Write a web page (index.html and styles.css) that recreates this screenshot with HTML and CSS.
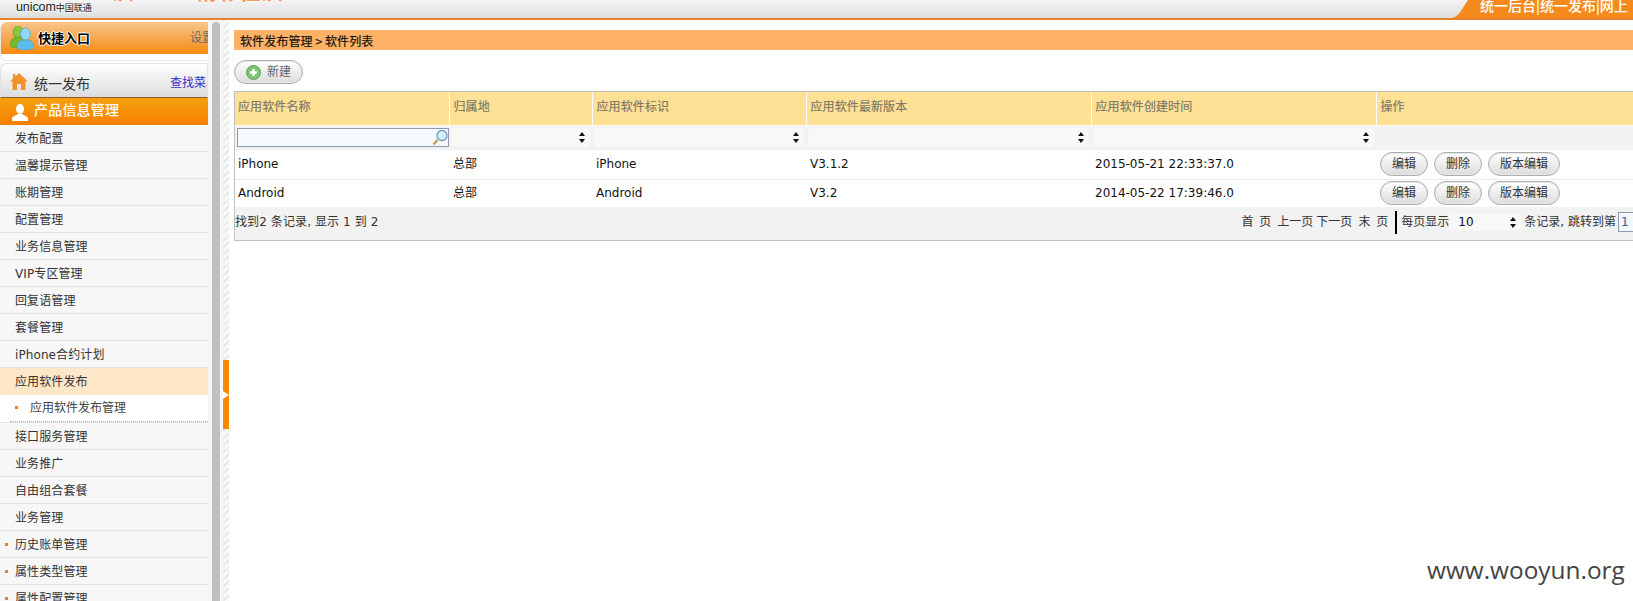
FILE: index.html
```html
<!DOCTYPE html>
<html lang="zh-CN">
<head>
<meta charset="utf-8">
<title>软件列表</title>
<link rel="stylesheet" href="styles.css">
</head>
<body>
<div class="page">
  <header class="topbar">
    <div class="logo"><span class="logo-uni">unicom</span><span class="logo-cn">中国联通</span></div>
    <div class="slogan"><span>沃3G</span><span class="slogan-b">精彩在沃</span></div>
    <div class="top-tab">
      <svg class="tab-curve" width="18" height="18" viewBox="0 0 18 18"><path d="M0 18C9 18 11 10 18 0V18Z" fill="#f58a1c"/></svg>
      <div class="tab-body">统一后台|统一发布|网上</div>
    </div>
  </header>
  <div class="body">
    <aside class="sidebar">
      <section class="quick">
        <div class="quick-head">
          <svg class="quick-icon" width="24" height="24" viewBox="0 0 24 24">
            <ellipse cx="8" cy="6" rx="5" ry="6" fill="#8cc63c" stroke="#5f9a20" stroke-width=".6"/><path d="M0 19c0-5 3-8 8-8s6 2 6 8l-6 3c-4 0-8-1-8-3Z" fill="#7ab62c" stroke="#5f9a20" stroke-width=".6"/>
            <ellipse cx="15.500" cy="8" rx="5" ry="6" fill="#8fd8f6" stroke="#3f9fd0" stroke-width=".6"/><path d="M7 21c0-5 3-7 8.500-7s8.500 2 8.500 7c0 2-4 3-8.500 3s-8.500-1-8.500-3Z" fill="#5cbcea" stroke="#3f9fd0" stroke-width=".6"/>
          </svg>
          <span class="quick-title">快捷入口</span>
          <span class="quick-set">设置</span>
        </div>
      </section>
      <section class="nav">
        <div class="nav-title">
          <svg class="home-icon" width="18" height="17" viewBox="0 0 18 17"><path d="M9 0 18 8.500H15.500V17H11V11H7V17H2.500V8.500H0L3 5.700V1H5.500V3.400Z" fill="#f0922a"/></svg>
          <span class="nav-name">统一发布</span>
          <span class="nav-find">查找菜单</span>
        </div>
        <div class="nav-group">
          <svg class="person-icon" width="16" height="17" viewBox="0 0 16 17"><ellipse cx="8" cy="5" rx="4" ry="5" fill="#fff"/><path d="M0 17V14.500C0 12.500 4 11.500 6 10H10C12 11.500 16 12.500 16 14.500V17Z" fill="#fff"/></svg>
          <span class="nav-group-name">产品信息管理</span>
        </div>
        <ul class="nav-list">
          <li class="nav-item">发布配置</li>
          <li class="nav-item">温馨提示管理</li>
          <li class="nav-item">账期管理</li>
          <li class="nav-item">配置管理</li>
          <li class="nav-item">业务信息管理</li>
          <li class="nav-item">VIP专区管理</li>
          <li class="nav-item">回复语管理</li>
          <li class="nav-item">套餐管理</li>
          <li class="nav-item">iPhone合约计划</li>
          <li class="nav-item nav-active">应用软件发布</li>
          <li class="nav-sub"><div class="nav-sub-row"><i class="dot"></i>应用软件发布管理</div></li>
          <li class="nav-item">接口服务管理</li>
          <li class="nav-item">业务推广</li>
          <li class="nav-item">自由组合套餐</li>
          <li class="nav-item">业务管理</li>
          <li class="nav-item nav-dot"><i class="dot"></i>历史账单管理</li>
          <li class="nav-item nav-dot"><i class="dot"></i>属性类型管理</li>
          <li class="nav-item nav-dot"><i class="dot"></i>属性配置管理</li>
        </ul>
      </section>
    </aside>
    <div class="scroll-track"><div class="scroll-thumb"></div></div>
    <div class="splitter"><div class="split-handle"><i class="split-arrow"></i></div></div>
    <main class="main">
      <div class="crumb">软件发布管理 &gt; 软件列表</div>
      <div class="toolbar">
        <button class="btn btn-new" type="button">
          <svg width="15" height="15" viewBox="0 0 15 15"><circle cx="7.500" cy="7.500" r="7" fill="#7cc576" stroke="#5aa552"/><path d="M7.500 4v7M4 7.500h7" stroke="#fff" stroke-width="2.400"/></svg>
          新建
        </button>
      </div>
      <div class="grid">
        <table class="table">
          <colgroup>
            <col class="c1"><col class="c2"><col class="c3"><col class="c4"><col class="c5"><col class="c6">
          </colgroup>
          <thead>
            <tr class="head">
              <th>应用软件名称</th><th>归属地</th><th>应用软件标识</th><th>应用软件最新版本</th><th>应用软件创建时间</th><th>操作</th>
            </tr>
            <tr class="filter">
              <td><div class="search"><svg width="16" height="17" viewBox="0 0 16 17"><path d="M5.500 11 1.500 15.500" stroke="#c9995c" stroke-width="2.500"/><circle cx="10" cy="6.500" r="5" fill="#d8eefa" stroke="#6c9fc2" stroke-width="1.300"/></svg></div></td>
              <td><div class="sel"><svg class="updown" width="6" height="11" viewBox="0 0 6 11"><path d="M3 0 6 4H0ZM3 11 0 7H6Z"/></svg></div></td>
              <td><div class="sel"><svg class="updown" width="6" height="11" viewBox="0 0 6 11"><path d="M3 0 6 4H0ZM3 11 0 7H6Z"/></svg></div></td>
              <td><div class="sel"><svg class="updown" width="6" height="11" viewBox="0 0 6 11"><path d="M3 0 6 4H0ZM3 11 0 7H6Z"/></svg></div></td>
              <td><div class="sel"><svg class="updown" width="6" height="11" viewBox="0 0 6 11"><path d="M3 0 6 4H0ZM3 11 0 7H6Z"/></svg></div></td>
              <td></td>
            </tr>
          </thead>
          <tbody>
            <tr class="row">
              <td>iPhone</td><td class="muted">总部</td><td>iPhone</td><td>V3.1.2</td><td>2015-05-21 22:33:37.0</td>
              <td><div class="ops"><button class="btn" type="button">编辑</button><button class="btn" type="button">删除</button><button class="btn btn-wide" type="button">版本编辑</button></div></td>
            </tr>
            <tr class="row">
              <td>Android</td><td class="muted">总部</td><td>Android</td><td>V3.2</td><td>2014-05-22 17:39:46.0</td>
              <td><div class="ops"><button class="btn" type="button">编辑</button><button class="btn" type="button">删除</button><button class="btn btn-wide" type="button">版本编辑</button></div></td>
            </tr>
          </tbody>
        </table>
        <div class="footer">
          <span class="count">找到2 条记录, 显示 1 到 2</span>
          <div class="pager">
            <span class="pg pg-first">首 页</span>
            <span class="pg pg-prev">上一页</span>
            <span class="pg pg-next">下一页</span>
            <span class="pg pg-last">末 页</span>
            <i class="pg-bar"></i>
            <span class="pg-label">每页显示</span>
            <div class="size"><span>10</span><svg class="updown" width="6" height="11" viewBox="0 0 6 11"><path d="M3 0 6 4H0ZM3 11 0 7H6Z"/></svg></div>
            <span class="pg-label">条记录, 跳转到第</span>
            <div class="jump">1</div>
          </div>
        </div>
      </div>
    </main>
  </div>
  <div class="watermark">www.wooyun.org</div>
</div>
</body>
</html>
```
FILE: styles.css
```css
* { box-sizing: border-box; }
html, body { margin: 0; padding: 0; height: 100%; overflow: hidden; background: #fff; }
body { font: 12px/1.2 "DejaVu Sans", "Noto Sans CJK SC", sans-serif; color: #222; }
ul { list-style: none; margin: 0; padding: 0; }
i { display: block; font-style: normal; }

.page { position: relative; width: 1633px; height: 601px; overflow: hidden; display: flex; flex-direction: column; }

/* top bar */
.topbar { flex: none; height: 20px; display: flex; align-items: flex-start; overflow: hidden; background: linear-gradient(#f4f4f4, #dedede); border-bottom: 2px solid #e5822e; }
.logo { width: 110px; padding: 1px 0 0 16px; display: flex; align-items: baseline; white-space: nowrap; color: #222; height: 18px; }
.logo-uni { font: 12.500px/12px "Liberation Sans", sans-serif; letter-spacing: -.1px; text-shadow: 0 1px 1px #fff; }
.logo-cn { font: 9px/12px "Noto Sans CJK SC", sans-serif; text-shadow: 0 1px 1px #fff; }
.slogan { width: 1340px; margin-top: -26px; padding-left: 2px; display: flex; font: bold 22px/30px "Noto Sans CJK SC", sans-serif; color: #f59a60; text-shadow: 0 1px 1px #fff; white-space: nowrap; }
.slogan span { width: 83px; }
.slogan .slogan-b { width: auto; }
.top-tab { display: flex; height: 18px; position: absolute; left: 1450px; right: 0; top: 0; }
.tab-curve { flex: none; }
.tab-body { flex: 1; background: #f58a1c; padding-left: 12px; font: 500 14px/10px "Noto Sans CJK SC", sans-serif; letter-spacing: 0; color: #fff; white-space: nowrap; overflow: hidden; height: 18px; }

.body { flex: 1; display: flex; min-height: 0; }

/* sidebar */
.sidebar { flex: none; width: 208px; padding-top: 2px; background: #fff; display: flex; flex-direction: column; overflow: hidden; }
.quick { height: 39px; border: 1px solid #e8e8e8; border-width: 0 0 1px 1px; border-radius: 6px 0 0 6px; flex: none; background: #fff; }
.quick-head { height: 32px; display: flex; align-items: center; padding-left: 9px; border-radius: 6px 0 0 0; background: linear-gradient(#f7c68c, #f68a10); overflow: hidden; white-space: nowrap; }
.quick-icon { flex: none; }
.quick-title { margin-left: 4px; font: bold 13px/16px "Noto Sans CJK SC", sans-serif; color: #000; text-shadow: 1px 0 #fff, -1px 0 #fff, 0 1px #fff, 0 -1px #fff; }
.quick-set { margin-left: 100px; color: #6b6b6b; font-size: 12px; flex: none; }
.nav { margin-top: 2px; flex: 1; min-height: 0; background: #f7f7f7; }
.nav-title { height: 35px; display: flex; align-items: center; padding: 6px 0 0 9px; border: 1px solid #e3e3e3; border-bottom: 1px solid #8c5a2c; border-radius: 7px 0 0 0; background: linear-gradient(#fff, #dcdcdc); overflow: hidden; white-space: nowrap; }
.home-icon { flex: none; margin-top: -5px; }
.nav-name { margin: 2px 0 0 6px; font-size: 14px; color: #333; }
.nav-find { margin-left: auto; width: 37px; flex: none; color: #3232c8; overflow: hidden; }
.nav-group { height: 27px; display: flex; align-items: flex-end; padding: 0 0 4px 12px; gap: 6px; background: linear-gradient(#f6a10e, #f67f02); color: #fff; font: 500 14px/16px "Noto Sans CJK SC", sans-serif; letter-spacing: .2px; }
.nav-group-name { margin-bottom: 4px; }
.nav-item { position: relative; height: 27px; line-height: 28px; padding-left: 15px; border-bottom: 1px solid #e3e3e3; color: #333; white-space: nowrap; letter-spacing: .1px; }
.nav-active { background: #fee6c8; border-bottom-color: #fee6c8; }
.nav-sub { height: 28px; background: #fff; border-bottom: 1px solid #e3e3e3; }
.nav-sub-row { height: 27px; margin-left: 10px; padding-left: 20px; line-height: 27px; border-bottom: 1px dotted #aaa; color: #444; position: relative; }
.dot { position: absolute; width: 3px; height: 3px; background: #f57f20; }
.nav-sub-row .dot { left: 5px; top: 11px; }
.nav-dot .dot { left: 5px; top: 12px; }

/* scrollbar + splitter */
.scroll-track { flex: none; width: 15px; padding: 2px 3px 0 4px; background: #f6f6f6; }
.scroll-thumb { height: 100%; background: #c0c0c0; border-radius: 4px 4px 0 0; }
.splitter { flex: none; width: 6px; display: flex; flex-direction: column; justify-content: flex-start; padding-top: 340px; background: repeating-linear-gradient(135deg, #e8e8e8 0 2px, #f8f8f8 2px 5px); }
.split-handle { height: 69px; background: #f98802; display: flex; align-items: center; }
.split-arrow { width: 0; height: 0; border-left: 6px solid #fff; border-top: 4px solid transparent; border-bottom: 4px solid transparent; }

/* main */
.main { flex: none; width: 1500px; padding: 10px 0 0 5px; }
.crumb { height: 20px; line-height: 21px; padding-left: 6px; background: #ffb266; color: #111; font-size: 12px; font-family: "Noto Sans CJK SC", sans-serif; letter-spacing: .1px; -webkit-text-stroke: .2px #111; width: 1399px; }
.toolbar { height: 41px; padding-top: 10px; }
.btn { height: 24px; min-width: 48px; padding: 0; border: 1px solid #adadad; border-radius: 12px; background: linear-gradient(#fff, #dcdcdc); color: #333; font: 12px/20px "DejaVu Sans", "Noto Sans CJK SC", sans-serif; box-shadow: inset 0 0 0 1px #e8e8e8; display: inline-flex; align-items: center; justify-content: center; }
.btn-new { width: 69px; gap: 6px; color: #666; }
.btn-wide { width: 72px; }
.grid { width: 1408px; border: 1px solid #c0c0c0; border-right: 0; }
.table { width: 100%; border-collapse: collapse; table-layout: fixed; }
.c1 { width: 214px; } .c2 { width: 143px; } .c3 { width: 214px; } .c4 { width: 285px; } .c5 { width: 285px; }
.head th { height: 33px; padding: 0 0 2px 4px; background: #ffe196; border-left: 1px solid #fff; border-bottom: 1px solid #fff; color: #807a68; font-weight: normal; text-align: left; -webkit-text-stroke: .2px #807a68; letter-spacing: .1px; }
.head th:first-child { border-left: 0; padding-left: 3px; }
.filter td { height: 25px; padding: 2px 2px 3px 2px; background: #f2f2f2; vertical-align: top; }
.search { height: 19px; margin-right: -2px; display: flex; justify-content: flex-end; align-items: center; border: 1px solid #8c9bae; background: #f5f9fd; }
.sel { height: 19px; display: flex; justify-content: flex-end; align-items: center; padding-right: 5px; background: #f8f8f8; border-radius: 5px; }
.updown { fill: #111; flex: none; }
.row td { height: 29px; padding: 0 0 0 4px; border-bottom: 1px solid #ececec; color: #111; }
.row td:first-child { padding-left: 3px; }
.row:last-child td { height: 28px; border-bottom: 0; }
.muted { color: #555; }
.ops { display: flex; gap: 6px; }
.footer { height: 33px; display: flex; justify-content: space-between; align-items: center; padding: 0 0 3px 0; background: #f2f2f2; color: #333; white-space: nowrap; }
.count { letter-spacing: .1px; }
.pager { display: flex; align-items: center; height: 100%; flex: none; }
.pg { width: 35px; text-align: center; }
.pg-first, .pg-last { width: 30px; word-spacing: 2px; }
.pg-first { margin-right: 6px; }
.pg-prev { margin-right: 4px; }
.pg-next { margin-right: 7px; }
.pg-bar { width: 2px; height: 23px; margin: 0 4px 0 7px; background: #000; }
.pg-label { flex: none; }
.size { width: 72px; height: 18px; margin: 0 3px 0 0; padding: 0 5px 0 9px; display: flex; align-items: center; justify-content: space-between; background: #f8f8f8; border-radius: 5px; color: #111; }
.jump { width: 24px; height: 20px; margin: 0 0 0 2px; padding-left: 2px; flex: none; border: 1px solid #8c9bae; background: #f5f9fd; color: #3a55a0; line-height: 18px; }

.watermark { position: absolute; left: 1427px; top: 555px; font: 24.400px/30px "Open Sans", sans-serif; color: #444; white-space: nowrap; }
```
